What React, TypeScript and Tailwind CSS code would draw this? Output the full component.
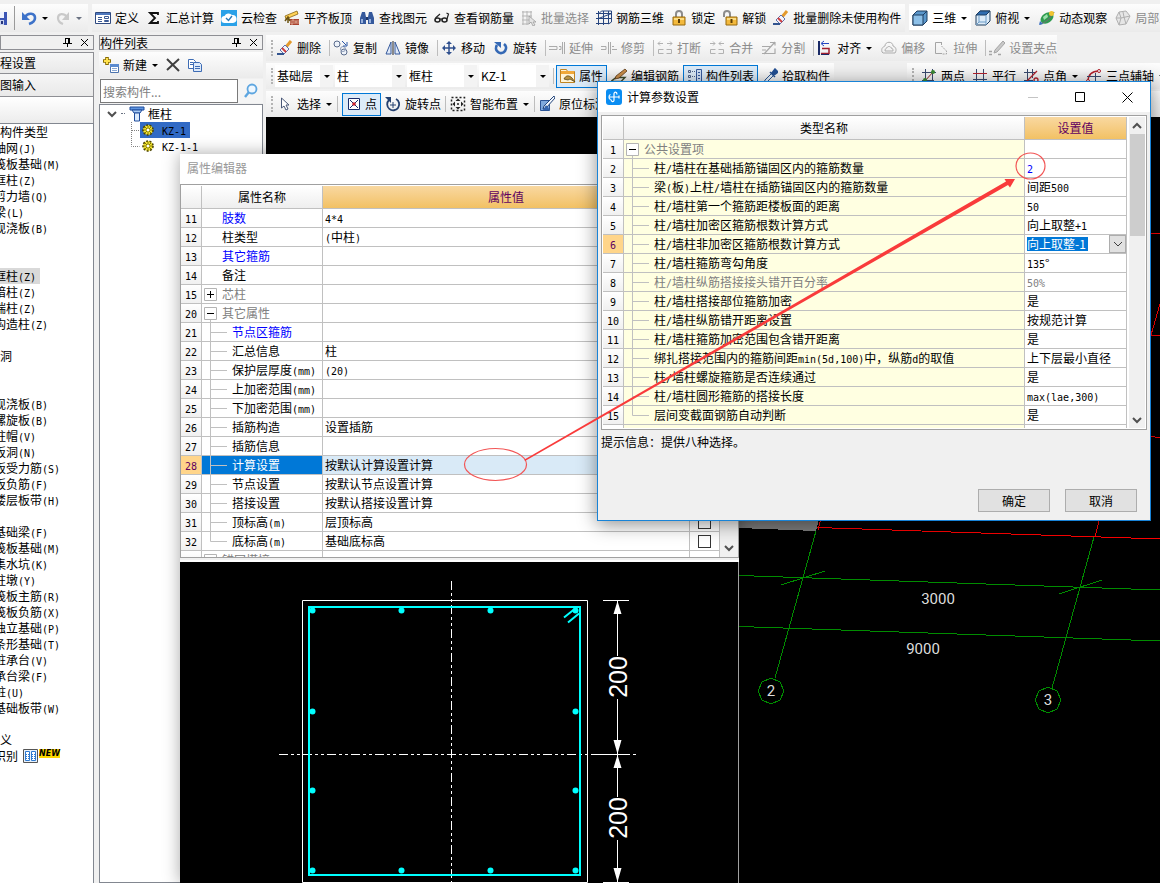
import type { ReactNode } from "react";
import { clsx } from "clsx";

// ---------- Icons ----------

const ICONS: Record<string, ReactNode> = {
  save: (
    <>
      <path d="M1 2h14v13H3l-2-2z" fill="#3b55b5" />
      <path d="M4 2h8v6H4z" fill="#eef2ff" />
      <path d="M5 10h7v5H5z" fill="#c9d3ee" />
      <path d="M9 11h2v3H9z" fill="#26357c" />
    </>
  ),
  undo: (
    <>
      <path d="M4 7c3-5 10-4 10 1 0 3-3 5-6 6" fill="none" stroke="#3e73c9" strokeWidth="2.600" />
      <path d="M1 2v8h8z" fill="#3e73c9" />
    </>
  ),
  redo: (
    <>
      <path d="M12 7c-3-4-9-4-9 1 0 3 2 5 5 6" fill="none" stroke="#c9c9c9" strokeWidth="2.200" />
      <path d="M14 2v8H7z" fill="#c9c9c9" />
    </>
  ),
  define: (
    <>
      <path d="M.5 2.500h15v11H.5z" fill="#fff" stroke="#2f4a80" />
      <path d="M1 3h14v2H1z" fill="#4f78bd" />
      <path d="M3 7.500h4M3 9.500h4M3 11.500h4" stroke="#3c5a94" />
      <path d="M9.500 6.500h4v2h-4zM9.500 10.500h4v1h-4z" fill="#fff" stroke="#3c5a94" />
    </>
  ),
  sigma: <path d="M12 5V3H4l5 5-5 5h8v-2" fill="none" stroke="#111" strokeWidth="1.800" />,
  cloud: (
    <>
      <path d="M0 0h16v16H0z" fill="#2aa1e8" />
      <path d="M4 13a3.500 3.500 0 0 1-.5-7A4.500 4.500 0 0 1 11 5a4 4 0 0 1 1 8z" fill="#fff" />
      <path d="M5 8l2.500 2.500L11 6" fill="none" stroke="#2a7ab8" strokeWidth="1.400" />
    </>
  ),
  slab: (
    <>
      <path d="M6 9h9v6H6z" fill="#a8402d" />
      <path d="M6 11h9M6 13h9M9 9v2M12 11v2M8 13v2" stroke="#f0cdb8" strokeWidth=".7" />
      <path d="M1 6l12-5 1 3L2 9z" fill="#ffd257" stroke="#8a6411" strokeWidth=".8" />
      <path d="M4 8v5M1 11l3-4 2 4" fill="none" stroke="#6b5312" strokeWidth="1.500" />
    </>
  ),
  binoculars: (
    <>
      <path d="M3 2h3l1 5v7H1V8zM10 2h3l2 6v6H9V7z" fill="#35599c" />
      <path d="M7 7h2v3H7z" fill="#1f3768" />
      <path d="M3 9v4M11 9v4" stroke="#b9cef2" strokeWidth="1.500" />
    </>
  ),
  glasses: (
    <>
      <ellipse cx="3.500" cy="10" rx="2.500" ry="2" fill="none" stroke="#222" strokeWidth="1.600" />
      <ellipse cx="10.500" cy="10" rx="2.500" ry="2" fill="none" stroke="#222" strokeWidth="1.600" />
      <path d="M6 9h2M1.500 8L6 4M13 9l1.500-5-2-1" fill="none" stroke="#222" strokeWidth="1.200" />
    </>
  ),
  batchSelect: (
    <>
      <path d="M1 2h10M1 6h10M1 10h7M1 14h7M2 1v14M6 1v14M10 1v7" stroke="#b5b5b5" />
      <path d="M8 6v8l2-2 2 4 2-1-2-3h3z" fill="#e3e3e3" stroke="#9c9c9c" strokeWidth=".8" />
    </>
  ),
  rebar3d: (
    <path
      d="M0 3.500h15M0 8.500h15M0 13.500h12M2.500 1v14M7.500 1v14M12.500 1v13M15.500 1v11l-3 2M2.500 4l3-3h10M2.500 8.500l13-5"
      fill="none"
      stroke="#27457f"
    />
  ),
  lock: (
    <>
      <path d="M5 7V4a3 3 0 0 1 6 0v3" fill="none" stroke="#8c8c8c" strokeWidth="2" />
      <path d="M2 7h12v8H2z" fill="#f3b93c" stroke="#96680d" />
      <path d="M3 8h10v2H3z" fill="#fbdc85" />
      <path d="M8 9v4" stroke="#5c3e05" strokeWidth="2" />
    </>
  ),
  unlock: (
    <>
      <path d="M2 7V4a3 3 0 0 1 6 0v3" fill="none" stroke="#8c8c8c" strokeWidth="2" />
      <path d="M4 7h11v8H4z" fill="#f3b93c" stroke="#96680d" />
      <path d="M5 8h9v2H5z" fill="#fbdc85" />
      <path d="M9.500 9v4" stroke="#5c3e05" strokeWidth="2" />
    </>
  ),
  brush: (
    <>
      <path d="M14 1L9 7" stroke="#e39a2d" strokeWidth="3" />
      <path d="M8 5l4 4-5 5-4-4z" fill="#f4f4f8" stroke="#5d6fae" />
      <path d="M5 8l4 4" stroke="#cf3b3b" strokeWidth="1.800" />
      <path d="M0 14h7" stroke="#32548f" strokeWidth="2" />
    </>
  ),
  cube: (
    <>
      <path d="M1 5l4-4h10v10l-4 4H1z" fill="#5b97cb" stroke="#1d3c5f" />
      <path d="M1 5h10v10H1z" fill="#8dc0e8" stroke="#1d3c5f" />
      <path d="M11 5l4-4" stroke="#1d3c5f" />
    </>
  ),
  topView: (
    <>
      <path d="M1 5l4-4h10v10l-4 4H1z" fill="#dcebf8" stroke="#1d3c5f" />
      <path d="M1 5l4-4h10l-4 4z" fill="#2f6db0" stroke="#1d3c5f" />
      <path d="M11 5v10M4 12V5M4 12l-3 3M4 12h7" stroke="#6c9cc7" />
    </>
  ),
  orbit: (
    <>
      <ellipse cx="8" cy="8" rx="7" ry="5" transform="rotate(-35 8 8)" fill="#2e9b4f" />
      <path d="M4 7l4-3 1 3-4 3z" fill="#9be0ac" />
      <path d="M1 14c5-1 10-5 14-12" fill="none" stroke="#5c7c68" strokeWidth="1.500" />
      <circle cx="12.500" cy="3.500" r="2.500" fill="#f0c431" />
      <path d="M0 15l1-4 3 3z" fill="#3a6fc4" />
    </>
  ),
  localView: (
    <path
      d="M4 2l7-1 4 5-4 8-7 1-3-7zM6 8l9-2M6 8l-2 7M6 8L4 2M1 8h5M9 7l-1-5M9 7l2 7"
      fill="#e6e6e6"
      stroke="#b0b0b0"
    />
  ),
  copy: (
    <>
      <circle cx="4" cy="4" r="3" fill="#eef3fa" stroke="#5a6c8c" />
      <circle cx="11" cy="12" r="3" fill="#eef3fa" stroke="#5a6c8c" />
      <circle cx="10" cy="9" r="2.500" fill="none" stroke="#8b9bb8" />
      <path d="M9 1l4 4M14 2v4h-4" fill="none" stroke="#2b57a6" />
    </>
  ),
  mirror: (
    <>
      <path d="M6 2v12H1zM10 2v12h5z" fill="#dfe9f8" stroke="#35599c" />
      <path d="M8 1v14" stroke="#222" />
    </>
  ),
  move: (
    <>
      <path d="M8 2v12M2 8h12" stroke="#2f4f8d" strokeWidth="1.500" />
      <path d="M8 1l3 3H5zM8 15l3-3H5zM1 8l3-3v6zM15 8l-3-3v6z" fill="#2f4f8d" />
    </>
  ),
  rotate: (
    <>
      <path d="M11 4a5 5 0 1 1-7 1" fill="none" stroke="#3569b5" strokeWidth="2.800" />
      <path d="M1 2h7v6z" fill="#3569b5" />
    </>
  ),
  extend: <path d="M0 6.500h8v3H0M10 6.500h2v3h-2M13.500 2v12M15.500 2v12" fill="none" stroke="#ababab" />,
  trim: <path d="M0 6.500h5v3H0M7.500 2v12M9.500 2v12M11 9.500h5M11 6.500h2" fill="none" stroke="#ababab" />,
  split: (
    <path
      d="M1 3.500h5M3 1.500l-2 2 2 2M10 3.500h5M13 1.500l2 2-2 2M1.500 9.500h5M1.500 13.500h5M9.500 9.500h5M9.500 13.500h5M1.500 9.500v4M14.500 9.500v4"
      fill="none"
      stroke="#b2b2b2"
    />
  ),
  merge: (
    <path
      d="M1 3.500h5M4 1.500l2 2-2 2M10 3.500h5M12 1.500l-2 2 2 2M1.500 9.500h5M1.500 13.500h5M9.500 9.500h5M9.500 13.500h5M1.500 9.500v4M14.500 9.500v4"
      fill="none"
      stroke="#b2b2b2"
    />
  ),
  divide: <path d="M1 6.500h9M1 13.500h13v-5M3 14L14 2M9 2.500h5v3M1 10h4" fill="none" stroke="#a9a9a9" strokeWidth="1.200" />,
  align: (
    <>
      <path d="M2 1v14" stroke="#1a2a66" strokeWidth="2" />
      <path d="M5 3.500h7M7 1L4 3.500 7 6" stroke="#2345c2" fill="none" />
      <path d="M5 8.500h7v5H4" fill="none" stroke="#a01e2e" strokeWidth="1.500" />
      <path d="M4 14.500h8" stroke="#1a2a66" />
    </>
  ),
  offset: (
    <>
      <path d="M1 12c-1-4 1-5 3-6 0-5 8-5 8 0 3 1 4 4 2 7H2z" fill="none" stroke="#adadad" />
      <path d="M4 11c0-2 1-3 2-3 0-2 4-2 4 0 2 0 2 2 2 3z" fill="none" stroke="#adadad" />
    </>
  ),
  stretch: (
    <>
      <path d="M9 2.500H2.500v11H9" fill="none" stroke="#a5a5a5" />
      <path d="M8.500 3v3l5 5v3H9" fill="none" stroke="#a5a5a5" strokeDasharray="2 1" />
    </>
  ),
  grip: (
    <>
      <path d="M0 11.500h3M0 14.500h3M9 14.500h3" fill="none" stroke="#a5a5a5" strokeWidth="1.500" />
      <path d="M14 1L6 10l-1 3 3-1 8-9z" fill="#c9c9c9" stroke="#a5a5a5" />
    </>
  ),
  props: (
    <>
      <path d="M.5 1.500h6l1 2h7v11H.5z" fill="#fff4d6" stroke="#c08421" />
      <path d="M1 3h13v3H1z" fill="#f0a93a" />
      <path d="M4 11c2-4 5-4 8-1l3 4-5-3-2 1z" fill="#b99341" stroke="#5a4718" strokeWidth=".8" />
    </>
  ),
  editRebar: (
    <>
      <path d="M0 13.500h10l4-4H5z" fill="none" stroke="#3c4a2a" strokeWidth="1.400" />
      <path d="M14 1l2 2-8 7-4 1 1-3z" fill="#c98d49" stroke="#5e3b16" strokeWidth=".8" />
    </>
  ),
  compList: (
    <>
      <path d="M1.500 2.500h2v2h-2zM1.500 7.500h2v2h-2zM1.500 12.500h2v2h-2z" fill="none" stroke="#4b5f86" />
      <path d="M5 3.500h3M5 8.500h3M5 13.500h3" stroke="#4b5f86" strokeDasharray="1 1" />
      <path d="M9.500 1.500h5v13h-5z" fill="#cfe0f6" stroke="#35599c" />
      <path d="M11 4.500h2M11 7.500h2M11 10.500h2" stroke="#35599c" />
    </>
  ),
  picker: (
    <>
      <path d="M10 5L3 12l-1 3 3-1 7-7z" fill="#e4effb" stroke="#2d578f" />
      <path d="M8 4l5 5M13 1l3 3-4 3-2-2z" fill="#224f93" stroke="#224f93" strokeWidth="1.500" />
    </>
  ),
  twoPoint: (
    <>
      <path d="M1 4.500h14M1 12.500h12M4.500 1v14M11.500 1v14" stroke="#3a4a6e" />
      <path d="M3 14L13 3" stroke="#8a1f1f" />
      <circle cx="4" cy="12" r="2" fill="#3a8a32" />
      <circle cx="12" cy="4" r="2" fill="#3a8a32" />
    </>
  ),
  parallel: (
    <>
      <path d="M4.500 1v14M11.500 1v14" stroke="#3a4a6e" />
      <path d="M1 5.500h14" stroke="#b3202c" />
      <path d="M1 11.500h14" stroke="#3a4a6e" />
    </>
  ),
  pointAngle: (
    <>
      <path d="M1 4.500h12M1 12.500h9M4.500 1v14M9.500 1v9" stroke="#3a4a6e" />
      <path d="M2 15L14 3" stroke="#b3202c" strokeWidth="1.300" />
      <circle cx="13" cy="12" r="2" fill="none" stroke="#b3202c" strokeWidth="1.300" />
    </>
  ),
  threePoint: (
    <>
      <path d="M2 14C2 7 6 3 13 3" fill="none" stroke="#b3202c" strokeWidth="1.500" />
      <path d="M1 8.500h14M9.500 5v10" stroke="#3a4a6e" />
      <circle cx="2" cy="13" r="1.500" fill="#fff" stroke="#b3202c" />
      <circle cx="13" cy="3" r="1.500" fill="#fff" stroke="#b3202c" />
    </>
  ),
  cursor: <path d="M4.500 2v10l2.500-2 2 4 2-1-2-4h3z" fill="#fff" stroke="#4a5878" />,
  point: (
    <>
      <path d="M2.500 2.500h11v11h-11z" fill="#fff" stroke="#1b2c6b" />
      <path d="M4 4l8 8M12 4l-8 8" stroke="#1b2c6b" />
      <circle cx="8" cy="8" r="1.800" fill="#c9202c" />
    </>
  ),
  rotatePoint: (
    <>
      <path d="M4 4a6 6 0 1 0 7-1" fill="none" stroke="#24406f" strokeWidth="1.800" />
      <path d="M0 1h6v6z" fill="#24406f" />
      <path d="M8 6v6M5 9h6" stroke="#24406f" />
    </>
  ),
  smart: (
    <>
      <path d="M1.500 1.500h13v13h-13z" fill="none" stroke="#222" strokeWidth="1.500" strokeDasharray="2 2" />
      <path d="M8 2.500l2.500 2.500h-5zM8 13.500l2.500-2.500h-5zM2.500 8L5 5.500v5zM13.500 8L11 5.500v5z" fill="#222" />
      <path d="M8 7v2M7 8h2" stroke="#222" />
    </>
  ),
  inPlace: (
    <>
      <path d="M1.500 4.500h9v10h-9z" fill="#7fa9dd" stroke="#2b5597" />
      <path d="M15 0l1 2-9 10-3 1 1-3z" fill="#f4f8fd" stroke="#24457b" />
      <path d="M7 9l4 5H4z" fill="#3566b0" />
    </>
  ),
  create: (
    <>
      <path d="M4 0v8M0 4h8" stroke="#8a6d00" strokeWidth="3.600" />
      <path d="M4 1v6M1 4h6" stroke="#ffe14d" strokeWidth="2" />
      <path d="M7.500 7.500h8v8h-8z" fill="#fff" stroke="#4d74ae" />
      <path d="M7 7h9v3H7z" fill="#5b8bd0" />
      <path d="M9 11.500h5M9 13.500h5" stroke="#8aa8d3" />
    </>
  ),
  remove: <path d="M2 2l12 12M14 2L2 13" stroke="#404040" strokeWidth="2" />,
  duplicate: (
    <>
      <path d="M1.500 2.500h5l2 2v7h-7z" fill="#fff" stroke="#3e6cb4" />
      <path d="M6.500 5.500h6l2 2v7h-8z" fill="#dce9fa" stroke="#3e6cb4" />
      <path d="M3 5.500h3M3 7.500h3M8 9.500h5M8 11.500h5" stroke="#3e6cb4" />
    </>
  ),
  search: (
    <>
      <circle cx="9" cy="6" r="4.500" fill="#eef7ff" stroke="#5ea6e0" strokeWidth="1.800" />
      <path d="M6 9l-4 5" stroke="#5ea6e0" strokeWidth="2.400" />
    </>
  ),
  column: (
    <>
      <path d="M1 1h14v3H1z" fill="#5f95e0" stroke="#1f4c9c" />
      <path d="M3 4h10l-2 3H5z" fill="#a9cbf5" stroke="#1f4c9c" />
      <path d="M5.500 7h5v8h-5z" fill="#d9e9fc" stroke="#1f4c9c" />
    </>
  ),
  gear: (
    <>
      <circle cx="8" cy="8" r="5" fill="#f4e52a" stroke="#4c4300" strokeDasharray="2 1.500" strokeWidth="1.600" />
      <path d="M8 4v8M4 8h8M5 5l6 6M11 5l-6 6" stroke="#4c4300" strokeWidth=".7" />
      <circle cx="8" cy="8" r="1.300" fill="#fff" />
    </>
  ),
  cadTable: (
    <>
      <path d="M.5 1.500h14v13H.5z" fill="#e9f2fc" stroke="#555" />
      <path d="M2.500 3.500h4v9h-4zM8.500 3.500h4v9h-4z" fill="#fff" stroke="#2e7ad1" />
      <path d="M3 6.500h3M3 8.500h3M3 10.500h3M9 6.500h3M9 8.500h3M9 10.500h3" stroke="#2e7ad1" strokeDasharray="1 1" />
    </>
  ),
  app: (
    <>
      <path d="M3 0h10a3 3 0 0 1 3 3v10a3 3 0 0 1-3 3H3a3 3 0 0 1-3-3V3a3 3 0 0 1 3-3z" fill="#0a8df2" />
      <path
        d="M11 5.500C11 2.500 8 2.500 8 5v6c0 2.500-3 2-3-.5M3 8h10M4.500 5.500C2.500 6 2.500 10 4.500 10.500M13 6.500v3"
        fill="none"
        stroke="#fff"
        strokeWidth="1.200"
      />
    </>
  ),
};

function Icon({ name }: { name: string }) {
  return (
    <svg viewBox="0 0 16 16" className="size-4 shrink-0" aria-hidden="true">
      {ICONS[name]}
    </svg>
  );
}

function Caret({ muted }: { muted?: boolean }) {
  return (
    <svg viewBox="0 0 8 8" className={clsx("size-2 shrink-0", muted ? "text-gray-500" : "text-black")} aria-hidden="true">
      <path d="M1 3h6L4 6z" fill="currentColor" />
    </svg>
  );
}

function Chevron({ up }: { up?: boolean }) {
  return (
    <svg viewBox="0 0 10 10" className="size-2.5 shrink-0" aria-hidden="true">
      <path d={up ? "M1 7l4-4 4 4" : "M1 3l4 4 4-4"} fill="none" stroke="#505050" strokeWidth="2" />
    </svg>
  );
}

// Half-width characters take exactly half of a full-width cell
function Cell({ children }: { children: string }) {
  return children.split(/([\x21-\x7e]+)/).map((part, i) =>
    i % 2 === 1 ? (
      <span key={i} className="font-['DejaVu_Sans_Mono',monospace] text-[10px] leading-none">
        {part}
      </span>
    ) : (
      part
    ),
  );
}

// ---------- Toolbars ----------

const STRIP = "flex items-center bg-linear-to-b from-[#fdfdfd] to-[#ebebeb]";

interface ToolProps {
  icon: string;
  label: string;
  disabled?: boolean;
  caret?: boolean;
}

function Tool({ icon, label, disabled, caret }: ToolProps) {
  return (
    <button
      type="button"
      disabled={disabled}
      className={clsx("flex shrink-0 items-center gap-1 whitespace-nowrap", disabled ? "text-[#8c8c8c]" : "text-black")}
    >
      <Icon name={icon} />
      {label}
      {caret && <Caret />}
    </button>
  );
}

function ActiveTool({ icon, label }: ToolProps) {
  return (
    <button
      type="button"
      aria-pressed="true"
      className="flex h-[23px] shrink-0 items-center gap-[3px] border border-[#0078d7] bg-[#dcebf8] px-[3px] whitespace-nowrap"
    >
      <Icon name={icon} />
      {label}
    </button>
  );
}

function Separator() {
  return <span className="h-4 w-px shrink-0 bg-[#bdbdbd]" />;
}

function Grip() {
  return <span className="ml-[5px] h-4 w-0.5 shrink-0 border-l-2 border-dotted border-[#b4b4b4]" />;
}

function Combo({ value, label, wide }: { value: string; label: string; wide?: boolean }) {
  return (
    <label className={clsx("flex h-[22px] shrink-0 items-center bg-white", wide ? "w-[70px]" : "w-[58px]")}>
      <select aria-label={label} defaultValue={value} className="min-w-0 flex-1 appearance-none pl-0.5 outline-none">
        <option>{value}</option>
      </select>
      <span className="flex h-full w-[13px] items-center justify-center bg-[#f3f3f3]">
        <Caret />
      </span>
    </label>
  );
}

const MAIN_TOOLS: ToolProps[] = [
  { icon: "define", label: "定义" },
  { icon: "sigma", label: "汇总计算" },
  { icon: "cloud", label: "云检查" },
  { icon: "slab", label: "平齐板顶" },
  { icon: "binoculars", label: "查找图元" },
  { icon: "glasses", label: "查看钢筋量" },
  { icon: "batchSelect", label: "批量选择", disabled: true },
  { icon: "rebar3d", label: "钢筋三维" },
  { icon: "lock", label: "锁定" },
  { icon: "unlock", label: "解锁" },
  { icon: "brush", label: "批量删除未使用构件" },
];

const EDIT_TOOLS: ToolProps[][] = [
  [{ icon: "brush", label: "删除" }],
  [
    { icon: "copy", label: "复制" },
    { icon: "mirror", label: "镜像" },
  ],
  [
    { icon: "move", label: "移动" },
    { icon: "rotate", label: "旋转" },
  ],
  [
    { icon: "extend", label: "延伸", disabled: true },
    { icon: "trim", label: "修剪", disabled: true },
  ],
  [
    { icon: "split", label: "打断", disabled: true },
    { icon: "merge", label: "合并", disabled: true },
    { icon: "divide", label: "分割", disabled: true },
  ],
  [
    { icon: "align", label: "对齐", caret: true },
    { icon: "offset", label: "偏移", disabled: true },
    { icon: "stretch", label: "拉伸", disabled: true },
  ],
  [{ icon: "grip", label: "设置夹点", disabled: true }],
];

function MainToolbar() {
  return (
    <header className="flex h-[35px] shrink-0 gap-1 pt-1 pb-[3px]">
      <div className={clsx(STRIP, "w-[88px] shrink-0")}>
        <button type="button" aria-label="保存" className="-ml-2">
          <Icon name="save" />
        </button>
        <span className="ml-1.5 h-6 w-px shrink-0 bg-[#9a9a9a]" />
        <button type="button" aria-label="撤销" className="ml-1.5 flex items-center gap-1">
          <Icon name="undo" />
          <Caret />
        </button>
        <button type="button" aria-label="恢复" className="ml-1.5 flex items-center gap-1">
          <Icon name="redo" />
          <Caret muted />
        </button>
      </div>
      <div className={clsx(STRIP, "shrink-0 gap-[7px] pr-1 pl-[3px]")}>
        {MAIN_TOOLS.map((tool) => (
          <Tool key={tool.label} {...tool} />
        ))}
      </div>
      <div className={clsx(STRIP, "min-w-0 flex-1 gap-1 overflow-hidden")}>
        <div className="flex h-6 shrink-0 items-center bg-white px-[3px]">
          <Tool icon="cube" label="三维" caret />
        </div>
        <div className="flex items-center gap-2">
          <Tool icon="topView" label="俯视" caret />
          <Tool icon="orbit" label="动态观察" />
          <Tool icon="localView" label="局部三维" disabled />
        </div>
      </div>
    </header>
  );
}

function EditToolbars() {
  return (
    <div className="flex shrink-0 flex-col gap-0.5">
      <div className={clsx(STRIP, "h-[26px] w-[791px]")}>
        <Grip />
        <div className="flex items-center gap-[3px] pl-1">
          {EDIT_TOOLS.map((group, i) => (
            <div key={i} className="flex items-center gap-[3px]">
              {i > 0 && <Separator />}
              <div className="flex items-center gap-2 pr-[5px]">
                {group.map((tool) => (
                  <Tool key={tool.label} {...tool} />
                ))}
              </div>
            </div>
          ))}
        </div>
      </div>

      <div className="flex h-[26px] justify-between">
        <div className={clsx(STRIP, "pr-1")}>
          <Grip />
          <div className="flex gap-0.5 pr-1 pl-0.5">
            <Combo label="楼层" value="基础层" />
            <Combo label="构件类别" value="柱" wide />
            <Combo label="构件类型" value="框柱" wide />
            <Combo label="构件名称" value="KZ-1" wide />
          </div>
          <Separator />
          <div className="flex items-center gap-1 pl-0.5">
            <ActiveTool icon="props" label="属性" />
            <Tool icon="editRebar" label="编辑钢筋" />
            <ActiveTool icon="compList" label="构件列表" />
            <Tool icon="picker" label="拾取构件" />
          </div>
        </div>
        <div className={clsx(STRIP, "w-[253px] gap-[7px] overflow-hidden")}>
          <Grip />
          <Tool icon="twoPoint" label="两点" />
          <Tool icon="parallel" label="平行" />
          <Tool icon="pointAngle" label="点角" caret />
          <Tool icon="threePoint" label="三点辅轴" caret />
        </div>
      </div>

      <div className={clsx(STRIP, "h-[26px] gap-1 pr-4")}>
        <Grip />
        <Tool icon="cursor" label="选择" caret />
        <Separator />
        <ActiveTool icon="point" label="点" />
        <Tool icon="rotatePoint" label="旋转点" />
        <Separator />
        <Tool icon="smart" label="智能布置" caret />
        <Separator />
        <Tool icon="inPlace" label="原位标注" />
      </div>
    </div>
  );
}

// ---------- Docked panels ----------

function PanelHeader({ title }: { title?: string }) {
  return (
    <div className="flex h-[15px] items-center border border-[#8e8f94] bg-[#f0f0f0]">
      <span className="flex-1 leading-[13px]">{title}</span>
      <button type="button" aria-label="固定" className="mr-2">
        <svg viewBox="0 0 9 9" className="size-[9px]">
          <path d="M2.500 0v5M2 .5h4.500M5.500 0v5M6.500 0v5M0 5.500h9M4.500 6v3" fill="none" stroke="#000" />
        </svg>
      </button>
      <button type="button" aria-label="关闭" className="mr-1">
        <svg viewBox="0 0 9 9" className="size-[9px]">
          <path d="M1 1l7 7M8 1L1 8" stroke="#000" />
        </svg>
      </button>
    </div>
  );
}

// depth 0 = category, depth 1 = component; null leaves an empty line
const MODULES: ({ text: string; depth: number; active?: boolean } | null)[] = [
  { text: "常用构件类型", depth: 0 },
  { text: "轴网(J)", depth: 1 },
  { text: "筏板基础(M)", depth: 1 },
  { text: "框柱(Z)", depth: 1 },
  { text: "剪力墙(Q)", depth: 1 },
  { text: "梁(L)", depth: 1 },
  { text: "现浇板(B)", depth: 1 },
  null,
  null,
  { text: "框柱(Z)", depth: 1, active: true },
  { text: "暗柱(Z)", depth: 1 },
  { text: "端柱(Z)", depth: 1 },
  { text: "构造柱(Z)", depth: 1 },
  null,
  { text: "门窗洞", depth: 0 },
  null,
  null,
  { text: "现浇板(B)", depth: 1 },
  { text: "螺旋板(B)", depth: 1 },
  { text: "柱帽(V)", depth: 1 },
  { text: "板洞(N)", depth: 1 },
  { text: "板受力筋(S)", depth: 1 },
  { text: "板负筋(F)", depth: 1 },
  { text: "楼层板带(H)", depth: 1 },
  null,
  { text: "基础梁(F)", depth: 1 },
  { text: "筏板基础(M)", depth: 1 },
  { text: "集水坑(K)", depth: 1 },
  { text: "柱墩(Y)", depth: 1 },
  { text: "筏板主筋(R)", depth: 1 },
  { text: "筏板负筋(X)", depth: 1 },
  { text: "独立基础(P)", depth: 1 },
  { text: "条形基础(T)", depth: 1 },
  { text: "桩承台(V)", depth: 1 },
  { text: "承台梁(F)", depth: 1 },
  { text: "桩(U)", depth: 1 },
  { text: "基础板带(W)", depth: 1 },
  null,
  { text: "自定义", depth: 0 },
];

function ModulePanel() {
  return (
    <aside className="flex w-[94px] shrink-0 flex-col overflow-hidden">
      <PanelHeader />
      <div className="mt-0.5 flex flex-col border-r border-[#8e8f94]">
        <button type="button" className="h-[22px] border-y border-[#8e8f94] bg-linear-to-b from-[#f6f6f6] to-[#e9e9e9] text-left">
          程设置
        </button>
        <button type="button" className="h-[23px] border-b border-[#8e8f94] bg-linear-to-b from-[#f6f6f6] to-[#e9e9e9] text-left">
          图输入
        </button>
        <div className="h-[26px] bg-linear-to-b from-white to-[#ececec]" />
      </div>
      <div className="min-h-0 flex-1 overflow-hidden border-t border-r border-[#828790] bg-white">
        <ul className="-ml-6 leading-4 whitespace-nowrap">
          {MODULES.map((item, i) => (
            <li key={i} className={clsx("flex h-4", item?.depth === 1 && "pl-[18px]")}>
              {item && (
                <span className={clsx(item.active && "bg-[#d9d9d9] pr-1")}>
                  <Cell>{item.text}</Cell>
                </span>
              )}
            </li>
          ))}
          <li className="flex h-4 items-center pl-[18px]">
            <span className="pr-[5px]">识别</span>
            <Icon name="cadTable" />
            <b className="mb-1.5 bg-[#ffd800] font-['DejaVu_Sans',sans-serif] text-[8px] leading-[9px] italic">NEW</b>
          </li>
        </ul>
      </div>
    </aside>
  );
}

function ComponentPanel() {
  return (
    <aside className="flex w-[164px] shrink-0 flex-col">
      <PanelHeader title="构件列表" />
      <div className={clsx(STRIP, "mt-0.5 h-[26px] gap-1.5 pl-1")}>
        <Tool icon="create" label="新建" caret />
        <button type="button" aria-label="删除构件">
          <Icon name="remove" />
        </button>
        <button type="button" aria-label="复制构件">
          <Icon name="duplicate" />
        </button>
      </div>
      <form className="mt-px flex h-6 items-center bg-[#f5f5f5] pl-px">
        <input
          type="text"
          aria-label="搜索构件"
          placeholder="搜索构件..."
          className="h-full w-[138px] border border-[#7a7a7a] bg-white pl-0.5 outline-none placeholder:text-[#808080]"
        />
        <button type="button" aria-label="搜索" className="flex flex-1 justify-center">
          <Icon name="search" />
        </button>
      </form>
      <ul className="mt-px min-h-0 flex-1 border border-[#828790] bg-white leading-4">
        <li className="flex h-[17px] items-center pl-[7px]">
          <Chevron />
          <span className="mx-1 w-1 border-t border-dotted border-gray-500" />
          <Icon name="column" />
          <span className="pl-[3px]">框柱</span>
        </li>
        {["KZ-1", "KZ-1-1"].map((name, i) => (
          <li key={name} className="flex h-4 pl-[31px]">
            <svg viewBox="0 0 9 16" className="h-4 w-[9px] shrink-0" aria-hidden="true">
              <path d={i === 0 ? "M.5 0v16M1 8.500h8" : "M.5 0v8.500h8"} fill="none" stroke="#808080" strokeDasharray="1 1" />
            </svg>
            <span className={clsx("flex items-center gap-1 pr-1", i === 0 && "bg-[#316ac5]")}>
              <Icon name="gear" />
              <span className="pl-0.5">
                <Cell>{name}</Cell>
              </span>
            </span>
          </li>
        ))}
      </ul>
    </aside>
  );
}

// ---------- Grids ----------

interface GridRow {
  no: number;
  name: string;
  value?: string;
  node?: "plus" | "minus" | "leaf" | "last" | "none";
  tone?: "blue" | "gray";
  valueTone?: "blue" | "gray";
  check?: boolean;
}

function TreeNode({ kind = "leaf" }: { kind?: GridRow["node"] }) {
  if (kind === "none") return <span className="w-5 shrink-0" />;
  if (kind === "plus" || kind === "minus") {
    return (
      <svg viewBox="0 0 20 18" className="h-[18px] w-5 shrink-0" aria-hidden="true">
        <path d="M2.500 3.500h12v12h-12z" fill="#fff" stroke="#b4b4b4" />
        <path d={kind === "plus" ? "M5 9.500h7M8.500 6v7" : "M5 9.500h7"} stroke="#000" />
        {kind === "minus" && <path d="M8.500 16v2" stroke="#c0c0c0" />}
      </svg>
    );
  }
  return (
    <svg viewBox="0 0 30 18" className="h-[18px] w-[30px] shrink-0" aria-hidden="true">
      <path d={kind === "last" ? "M8.500 0v9.500H25" : "M8.500 0v18M9 9.500h16"} fill="none" stroke="#c0c0c0" />
    </svg>
  );
}

const TD = "h-[19px] border-r border-b border-[#c0c0c0] p-0 leading-[18px]";
const TH = "h-[23px] border-r border-b border-[#c0c0c0] bg-linear-to-b from-white to-[#eeeeee] p-0 font-normal";
const TH_ACTIVE = "h-[23px] border-r border-b border-[#c0c0c0] bg-linear-to-b from-[#f9d8a0] to-[#f2c163] p-0 font-normal text-[#600060]";

function RowNumber({ no, current }: { no: number; current: boolean }) {
  return (
    <td className={clsx(TD, "text-center", current ? "bg-[#ffd58a] text-[#600060]" : "bg-linear-to-b from-white to-[#f0f0f0]")}>
      <Cell>{String(no)}</Cell>
    </td>
  );
}

const PROPERTIES: GridRow[] = [
  { no: 11, name: "肢数", value: "4*4", node: "none", tone: "blue" },
  { no: 12, name: "柱类型", value: "(中柱)", node: "none", check: true },
  { no: 13, name: "其它箍筋", node: "none", tone: "blue" },
  { no: 14, name: "备注", node: "none", check: true },
  { no: 15, name: "芯柱", node: "plus", tone: "gray" },
  { no: 20, name: "其它属性", node: "minus", tone: "gray" },
  { no: 21, name: "节点区箍筋", tone: "blue", check: true },
  { no: 22, name: "汇总信息", value: "柱", check: true },
  { no: 23, name: "保护层厚度(mm)", value: "(20)", check: true },
  { no: 24, name: "上加密范围(mm)", check: true },
  { no: 25, name: "下加密范围(mm)", check: true },
  { no: 26, name: "插筋构造", value: "设置插筋", check: true },
  { no: 27, name: "插筋信息", check: true },
  { no: 28, name: "计算设置", value: "按默认计算设置计算" },
  { no: 29, name: "节点设置", value: "按默认节点设置计算" },
  { no: 30, name: "搭接设置", value: "按默认搭接设置计算" },
  { no: 31, name: "顶标高(m)", value: "层顶标高", check: true },
  { no: 32, name: "底标高(m)", value: "基础底标高", node: "last", check: true },
  { no: 33, name: "锚固搭接", node: "plus", tone: "gray" },
];

function PropertyWindow() {
  return (
    <section className="absolute top-[154px] bottom-0 left-[180px] flex w-[559px] flex-col bg-[#f0f0f0] shadow-[0_0_16px_rgba(0,0,0,0.35)]">
      <h2 className="h-[30px] shrink-0 bg-white pl-[7px] leading-7 text-[#999999]">属性编辑器</h2>
      <div className="flex h-[374px] shrink-0 overflow-hidden border border-[#a0a0a0] bg-white pt-px">
        <div className="h-full shrink-0 overflow-hidden">
          <table className="w-[539px] table-fixed border-separate border-spacing-0">
            <colgroup>
              <col className="w-[21px]" />
              <col className="w-[121px]" />
              <col />
              <col className="w-[30px]" />
            </colgroup>
            <thead>
              <tr>
                <th className={TH} />
                <th className={TH}>属性名称</th>
                <th className={TH_ACTIVE}>属性值</th>
                <th className={TH} />
              </tr>
            </thead>
            <tbody>
              {PROPERTIES.map((row) => {
                const current = row.no === 28;
                return (
                  <tr key={row.no}>
                    <RowNumber no={row.no} current={current} />
                    <td className={clsx(TD, current && "bg-[#0078d7] text-white")}>
                      <div
                        className={clsx(
                          "flex h-[18px] whitespace-nowrap",
                          row.tone === "blue" && "text-[#0000ff]",
                          row.tone === "gray" && "text-[#808080]",
                        )}
                      >
                        <TreeNode kind={row.node} />
                        <span>
                          <Cell>{row.name}</Cell>
                        </span>
                      </div>
                    </td>
                    <td className={clsx(TD, "pl-0.5", current && "bg-[#d9eaf7]")}>
                      <Cell>{row.value ?? ""}</Cell>
                    </td>
                    <td className={TD}>
                      {row.check && (
                        <input
                          type="checkbox"
                          aria-label={row.name}
                          className="mx-auto block size-[13px] appearance-none border border-[#333333] bg-white"
                        />
                      )}
                    </td>
                  </tr>
                );
              })}
            </tbody>
          </table>
        </div>
        <div className="flex flex-1 flex-col items-center justify-between bg-[#f0f0f0] py-1">
          <Chevron up />
          <Chevron />
        </div>
      </div>
      <div className="h-1 shrink-0 border-b-2 border-white" />
      <div className="min-h-0 flex-1 overflow-hidden border-r border-[#a0a0a0] bg-black">
        <SectionDrawing />
      </div>
    </section>
  );
}

const REBARS = [
  [312, 610], [401, 610], [490, 610], [575, 610],
  [312, 711], [575, 711],
  [312, 790], [575, 790],
  [312, 870], [401, 870], [490, 870], [575, 870],
];

function SectionDrawing() {
  return (
    <svg viewBox="180 562 558 321" className="block h-[321px] w-[558px]">
      <path d="M302.500 600.500h285v282h-285z" fill="none" stroke="#fff" />
      <path d="M451.500 581v302M279 754.500h357" stroke="#fff" strokeDasharray="9 3 3 3 3 3" />
      <path d="M309 607h271v268H309z" fill="none" stroke="#00ffff" strokeWidth="2" />
      <path d="M564 617.500l10-8M568 622.500l11-9" stroke="#00ffff" strokeWidth="2" />
      {REBARS.map(([x, y]) => (
        <circle key={`${x}-${y}`} cx={x + 0.5} cy={y + 0.5} r="3" fill="#00ffff" />
      ))}
      <path d="M603 600.500h26M591 754.500h38M603 882.500h26" stroke="#fff" />
      <path d="M617.500 601v55M617.500 699v55M617.500 755v42M617.500 840v43" stroke="#fff" />
      <path
        d="M617.500 601l4 13h-8zM617.500 754l4-14h-8zM617.500 755l4 13h-8zM617.500 882l4-14h-8z"
        fill="#fff"
      />
      {[677, 818].map((y) => (
        <text
          key={y}
          transform={`translate(627 ${y}) rotate(-90)`}
          textAnchor="middle"
          className="fill-white font-['Liberation_Sans',sans-serif] text-[25px]"
        >
          200
        </text>
      ))}
    </svg>
  );
}

function ModelView() {
  return (
    <div className="min-h-0 flex-1 overflow-hidden bg-black">
      <svg viewBox="266 117 894 766" className="block h-[766px] w-[894px]" shapeRendering="crispEdges">
        <path d="M739 515h81l-4 16-77-3z" fill="#7d7d7d" />
        <path d="M817 527.500L1160 539M818 530l3-12M1095 537l5-20M1150 233.500h10M1160 304l-9 31h9M1150 436.500l10 1" fill="none" stroke="#ff0000" />
        <g fill="none" stroke="#008c00">
          <path d="M816 531l-41 147M1094 537l-42 151" />
          <path d="M739 575.500L1160 590M739 626.500L1160 641" />
          <path d="M781 585l44-14M1059 594l43-14" />
          <path d="M771 678l9 4 4 9-4 9-9 4-9-4-4-9 4-9zM1048 687l9 4 4 9-4 9-9 4-9-4-4-9 4-9z" />
        </g>
        <g textAnchor="middle" className="fill-[#dddddd] font-['Roboto',sans-serif] text-[15px]">
          <text x="938" y="604">3000</text>
          <text x="923" y="654">9000</text>
          <text x="771" y="696">2</text>
          <text x="1048" y="705">3</text>
        </g>
      </svg>
    </div>
  );
}

// ---------- Calculation settings dialog ----------

const SETTINGS: GridRow[] = [
  { no: 1, name: "公共设置项", node: "minus", tone: "gray" },
  { no: 2, name: "柱/墙柱在基础插筋锚固区内的箍筋数量", value: "2", valueTone: "blue" },
  { no: 3, name: "梁(板)上柱/墙柱在插筋锚固区内的箍筋数量", value: "间距500" },
  { no: 4, name: "柱/墙柱第一个箍筋距楼板面的距离", value: "50" },
  { no: 5, name: "柱/墙柱加密区箍筋根数计算方式", value: "向上取整+1" },
  { no: 6, name: "柱/墙柱非加密区箍筋根数计算方式", value: "向上取整-1" },
  { no: 7, name: "柱/墙柱箍筋弯勾角度", value: "135°" },
  { no: 8, name: "柱/墙柱纵筋搭接接头错开百分率", value: "50%", tone: "gray", valueTone: "gray" },
  { no: 9, name: "柱/墙柱搭接部位箍筋加密", value: "是" },
  { no: 10, name: "柱/墙柱纵筋错开距离设置", value: "按规范计算" },
  { no: 11, name: "柱/墙柱箍筋加密范围包含错开距离", value: "是" },
  { no: 12, name: "绑扎搭接范围内的箍筋间距min(5d,100)中，纵筋d的取值", value: "上下层最小直径" },
  { no: 13, name: "柱/墙柱螺旋箍筋是否连续通过", value: "是" },
  { no: 14, name: "柱/墙柱圆形箍筋的搭接长度", value: "max(lae,300)" },
  { no: 15, name: "层间变截面钢筋自动判断", value: "是", node: "last" },
];

function SettingsDialog() {
  return (
    <section
      role="dialog"
      aria-labelledby="settings-title"
      className="absolute top-[81px] left-[597px] flex h-[440px] w-[554px] flex-col border border-[#1883d7] bg-[#f0f0f0] shadow-[0_3px_18px_rgba(0,0,0,0.45)]"
    >
      <div className="flex h-[30px] shrink-0 items-center bg-white pl-2">
        <Icon name="app" />
        <h2 id="settings-title" className="flex-1 pl-[5px]">
          计算参数设置
        </h2>
        <div className="flex items-center gap-9 pr-[17px]">
          <button type="button" aria-label="最小化" disabled>
            <svg viewBox="0 0 11 11" className="size-[11px]">
              <path d="M0 5.500h10" stroke="#c4c4c4" />
            </svg>
          </button>
          <button type="button" aria-label="最大化">
            <svg viewBox="0 0 11 11" className="size-[11px]">
              <path d="M.5.500h9v9h-9z" fill="none" stroke="#000" />
            </svg>
          </button>
          <button type="button" aria-label="关闭">
            <svg viewBox="0 0 11 11" className="size-[11px]">
              <path d="M.5.500l10 10M10.500.500l-10 10" stroke="#000" />
            </svg>
          </button>
        </div>
      </div>

      <div className="mx-[3px] mt-[3px] flex h-[315px] shrink-0 justify-between border border-[#a0a0a0] bg-white p-px">
        <div className="h-full overflow-hidden">
          <table className="w-[524px] table-fixed border-separate border-spacing-0">
            <colgroup>
              <col className="w-[21px]" />
              <col />
              <col className="w-[102px]" />
            </colgroup>
            <thead>
              <tr>
                <th className={TH} />
                <th className={TH}>类型名称</th>
                <th className={TH_ACTIVE}>设置值</th>
              </tr>
            </thead>
            <tbody>
              {SETTINGS.map((row) => (
                <tr key={row.no}>
                  <RowNumber no={row.no} current={row.no === 6} />
                  <td className={clsx(TD, "bg-[#ffffe1]")}>
                    <div className={clsx("flex h-[18px] whitespace-nowrap", row.tone === "gray" && "text-[#808080]")}>
                      <TreeNode kind={row.node} />
                      <span>
                        <Cell>{row.name}</Cell>
                      </span>
                    </div>
                  </td>
                  <td
                    className={clsx(
                      TD,
                      "pl-0.5",
                      row.valueTone === "blue" && "text-[#0000ff]",
                      row.valueTone === "gray" && "text-[#808080]",
                    )}
                  >
                    {row.no === 6 ? (
                      <div className="flex h-[18px] items-center justify-between">
                        <select
                          aria-label={row.name}
                          defaultValue={row.value}
                          className="h-[14px] w-[61px] appearance-none bg-[#0078d7] leading-[14px] text-white outline-none"
                        >
                          <option>{row.value}</option>
                        </select>
                        <span className="flex h-[18px] w-[17px] items-center justify-center border border-[#adadad] bg-[#e1e1e1]">
                          <svg viewBox="0 0 10 10" className="size-2.5">
                            <path d="M1 3l4 4 4-4" fill="none" stroke="#404040" />
                          </svg>
                        </span>
                      </div>
                    ) : (
                      <Cell>{row.value ?? ""}</Cell>
                    )}
                  </td>
                </tr>
              ))}
              <tr>
                <td className={TD} />
                <td className={clsx(TD, "bg-[#ffffe1]")} />
                <td className={TD} />
              </tr>
            </tbody>
          </table>
        </div>
        <div className="flex w-4 flex-col items-center bg-[#f0f0f0]">
          <span className="flex h-[17px] items-center">
            <Chevron up />
          </span>
          <span className="h-[102px] w-[15px] bg-[#cdcdcd]" />
          <span className="mt-auto flex h-[17px] items-center">
            <Chevron />
          </span>
        </div>
      </div>

      <p className="mt-1 pl-[3px] leading-4">提示信息：提供八种选择。</p>

      <div className="mt-auto flex justify-end gap-[15px] pr-[13px] pb-2">
        <button type="button" className="h-[23px] w-[72px] border border-[#adadad] bg-[#e1e1e1]">
          确定
        </button>
        <button type="button" className="h-[23px] w-[72px] border border-[#adadad] bg-[#e1e1e1]">
          取消
        </button>
      </div>
    </section>
  );
}

// Red pen marks drawn over both windows
function Annotation() {
  return (
    <svg viewBox="0 0 1160 883" className="pointer-events-none absolute top-0 left-0 h-[883px] w-[1160px]" aria-hidden="true">
      <ellipse cx="495.500" cy="464.500" rx="31" ry="16" fill="none" stroke="#f25555" strokeWidth="1.200" />
      <ellipse cx="1030.500" cy="166" rx="14.500" ry="13" fill="none" stroke="#f25555" strokeWidth="1.200" />
      <path d="M524.500 459.500L1006 181.500l-1.500-2.500 10.500 0-5 8.500-2-2.500L525 461z" fill="#f93b3b" />
    </svg>
  );
}

export default function App() {
  return (
    <div className="relative flex h-screen flex-col overflow-hidden bg-[#f0f0f0] font-['Noto_Sans_CJK_SC',sans-serif] text-[12px] leading-4 text-black">
      <MainToolbar />
      <main className="flex min-h-0 flex-1">
        <ModulePanel />
        <div className="w-[5px] shrink-0" />
        <ComponentPanel />
        <div className="w-[3px] shrink-0" />
        <div className="flex min-w-0 flex-1 flex-col">
          <EditToolbars />
          <ModelView />
        </div>
      </main>
      <PropertyWindow />
      <SettingsDialog />
      <Annotation />
    </div>
  );
}
